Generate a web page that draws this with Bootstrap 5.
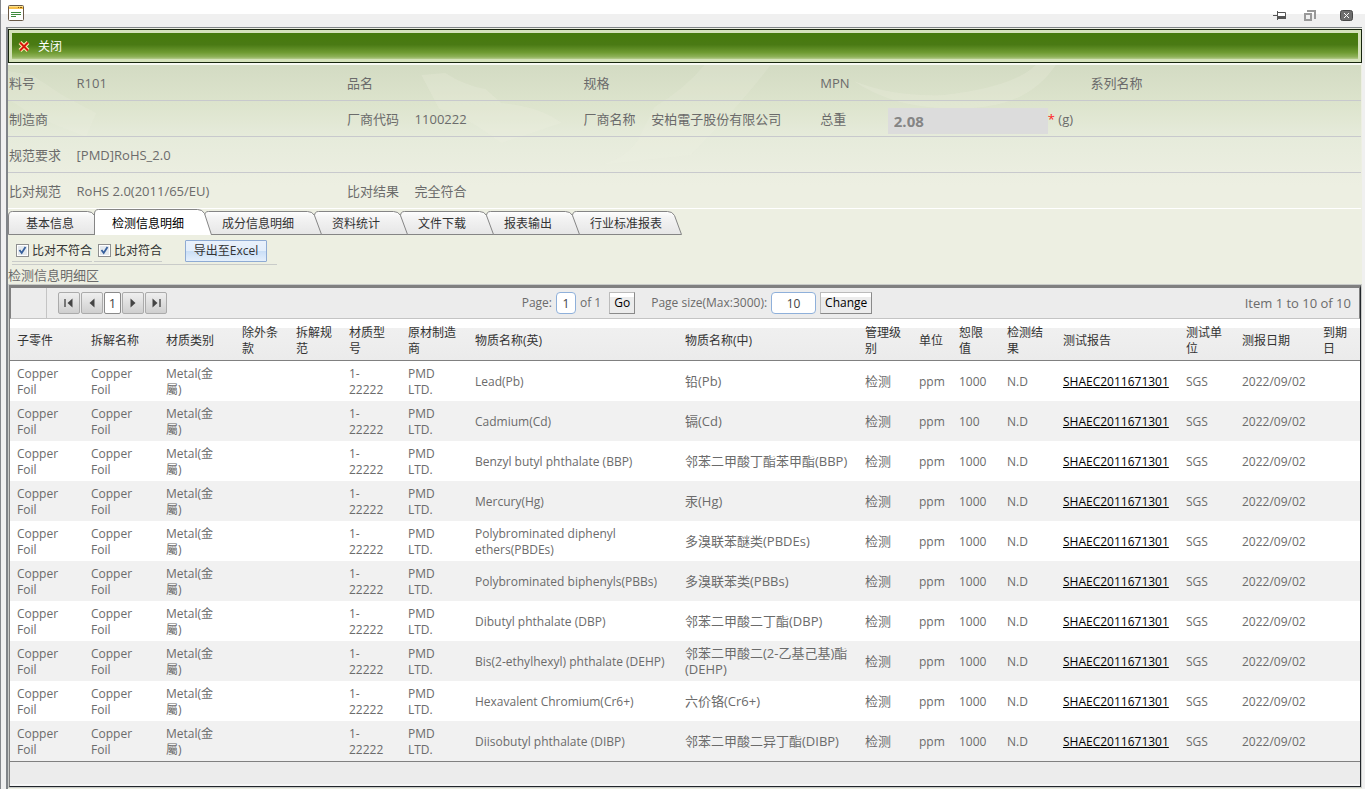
<!DOCTYPE html>
<html lang="zh-CN">
<head>
<meta charset="utf-8">
<meta name="viewport" content="width=device-width, initial-scale=1">
<title>检测信息明细</title>
<link href="https://cdn.jsdelivr.net/npm/bootstrap@5.3.0/dist/css/bootstrap.min.css" rel="stylesheet">
<style>
body{background:#f0f0f0;font-family:"Open Sans","Noto Sans CJK SC",sans-serif;font-size:13px;line-height:16px;color:#6b6b6b;border-left:1px solid #85888c}
.titlebar{height:27px;padding:0 12px 0 7px;background:linear-gradient(#fff 14px,#f0f0f0 14px)}
.win-btn{border:0;background:none;padding:0;line-height:0}
.pane{margin:0 3px 0 5px;border-left:2px solid #808488;border-top:1px solid #808488;background:#edefe2;padding-bottom:2px}
.toolbar{height:34px;margin-top:1px;border:1px solid #16240d;padding:3px;background:#d5e2bb}
.toolbar-in{height:26px;background:linear-gradient(#457a0b,#4a7a14 45%,#6f9b32 75%,#8fb25a 92%,#b5cc8c);padding:2px 0 0 6px}
.close-link{color:#fff;font-size:12px;text-decoration:none}
.close-link:hover{color:#fff}
.info{margin-right:1px;border-top:2px solid #f8faf4;position:relative;background:linear-gradient(#d3dbc3,#dde4cd 40px,#e6ebdb 72px,#edefe2 120px);border-bottom:1px solid #fff}
.swirl{position:absolute;inset:0;width:100%;height:100%}
.info-row{position:relative;display:grid;grid-template-columns:2fr 8fr 2fr 5fr 2fr 5fr 2fr 6fr 2fr 6fr;height:36px;align-items:center;border-bottom:1px solid #c8c9cd;padding-left:1px}
.info-row:last-child{border-bottom:0;height:35px}
.weight{width:160px;height:26px;border:0;background:#dcdcdc;color:#858585;font-size:15px;font-weight:700;padding:0 6px;margin-top:4px}
.req{color:#f22}
.tab-btn{position:relative;height:26px;border:0;background:none;padding:3px 20px 0 18px;font-size:12px;color:#333;white-space:nowrap}
.tab-btn svg{position:absolute;left:0;top:0;z-index:-1;overflow:visible}
.tab-btn:nth-child(1){z-index:7}
.tab-btn:nth-child(2){z-index:8}
.tab-btn:nth-child(3){z-index:6}
.tab-btn:nth-child(4){z-index:5}
.tab-btn:nth-child(5){z-index:4}
.tab-btn:nth-child(6){z-index:3}
.tab-btn:nth-child(7){z-index:2}
.tab-btn.active{color:#000}
.filters{height:32px;padding:5px 0 0 4px;color:#333;font-size:12px}
.tick{border-bottom:1px solid #c9cbc9;height:22px;padding-left:4px;margin-right:2px;gap:3px}
.tick input{appearance:none;width:13px;height:13px;margin:0;border:1px solid #8e8f8f;background:#e4e9ee;box-shadow:inset 0 0 0 1px #fff;background-image:url("data:image/svg+xml,%3Csvg xmlns='http://www.w3.org/2000/svg' viewBox='0 0 11 11'%3E%3Cpath d='M2.5 5 L4.7 8 L8.5 2' fill='none' stroke='%23365f9c' stroke-width='1.8'/%3E%3C/svg%3E")}
.tick-group{border-bottom:1px solid #c9cbc9;height:25px;width:173px}
.excel-wrap{border-bottom:1px solid #c9cbc9;height:25px;width:92px}
.excel{width:82px;height:22px;border:1px solid #8fabd3;border-radius:1px;background:linear-gradient(#e9f1fb 0,#e3eefb 50%,#c9def6 50%,#e4effc);color:#333;padding:0}
.grid-box{margin:2px 1px 0;border:1px solid #22262b;border-top:3px solid #808080;border-left:1px solid #808080;outline:1px solid #c8cac8;background:#ececec}
.pager{display:grid;grid-template-columns:1fr auto 1fr;align-items:center;height:31px;border-bottom:1px solid #c4c4c4;border-left:1px solid #808080;border-right:1px solid #808080}
.pg-lead{width:36px;border-right:1px solid #c4c4c4;margin-right:11px}
.pg-group{gap:1px}
.pg{width:22px;height:22px;border:1px solid #ababab;border-radius:2px;background:linear-gradient(#efefef,#cfcfcf);padding:0;line-height:0}
.pg-now{width:17px;height:22px;border:1px solid #8a8a8a;border-radius:2px;background:#fff;padding:0;color:#444}
.pg-set{font-size:12px;padding-left:24px}
.box-in{height:22px;border:1px solid #8fb0da;border-radius:4px;background:#fff;text-align:center;color:#444;padding:0}
.box-s{width:20px;margin:0 4px}
.box-l{width:45px;margin:0 4px}
.go{height:22px;border:1px solid;border-color:#bbb #8a8a8a #8a8a8a #bbb;background:linear-gradient(#fff 4px,#ececec 4px);color:#000;padding:0 4px}
.rs-table{width:100%;table-layout:fixed;border-collapse:separate;border-spacing:0}
.rs-table th{height:42px;padding:2px 7px 0;font-weight:400;font-size:12px;color:#333;white-space:pre;border-bottom:1px solid #808080;background:linear-gradient(#fff 9px,#f0f0f0 9px,#ebebeb)}
.rs-table td{height:40px;padding:1px 7px 0;white-space:pre;font-size:12px}
.rs-table td:nth-child(9),.rs-table td:nth-child(10){font-size:13px;padding-top:0}
.rs-table tbody tr{background:#fff}
.rs-table tbody tr:nth-child(even){background:#f1f1f1}
.rs-table a{color:#000}
.grid-foot{height:25px;border-top:1px solid #808080;border-bottom:2px solid #f6f6f6}
</style>
</head>
<body>
<svg width="0" height="0" class="position-absolute" aria-hidden="true">
<defs>
<linearGradient id="tabFill" x1="0" y1="0" x2="0" y2="1"><stop offset="0" stop-color="#fff"/><stop offset=".25" stop-color="#f4f4f4"/><stop offset="1" stop-color="#e6e6e6"/></linearGradient>
<path id="tabShort" d="M.5 25.500V7q0-4.500 4-4.500h75q5 0 7 4l7 19z" fill="url(#tabFill)" stroke="#858585"/>
<path id="tabLong" d="M.5 25.500V7q0-4.500 4-4.500h99q5 0 7 4l7 19z" fill="url(#tabFill)" stroke="#858585"/>
<path id="tabLast" d="M.5 25.500V7q0-4.500 4-4.500h91q5 0 7 4l7 19z" fill="url(#tabFill)" stroke="#858585"/>
</defs>
</svg>
<header class="titlebar d-flex justify-content-between">
<svg class="mt-1" width="17" height="17" viewBox="0 0 17 17"><rect x=".5" y="1.500" width="15" height="15" rx="1" fill="#fff" stroke="#6a5a48"/><path d="M1 2h14v3H1z" fill="#f7c04a"/><path d="M1 2h14v1H1z" fill="#fbe08a"/><path d="M10 3h1v1h-1zM12 3h2v1h-2z" fill="#8a5a10"/><path d="M3 8.500h10M3 10.500h10M3 12.500h5" stroke="#3c8a3c"/></svg>
<div class="d-flex align-items-start pt-2">
<button class="win-btn" aria-label="固定"><svg width="14" height="14" viewBox="0 0 14 14"><path d="M1 7.500h4M5.500 3v9M6 4.500h7.500v6H6" fill="#fff" stroke="#555"/><path d="M6 8h8v3H6z" fill="#555"/></svg></button>
<button class="win-btn ms-3" aria-label="还原"><svg width="14" height="14" viewBox="0 0 14 14"><path d="M5 3h8v8M3 6h6v6H3z" fill="none" stroke="#999" stroke-width="2"/></svg></button>
<button class="win-btn ms-4" aria-label="关闭窗口"><svg width="13" height="14" viewBox="0 0 13 14"><rect x=".5" y="2.500" width="12" height="10" rx="2" fill="#6e6e6e" stroke="#484848"/><path d="M4 5l5 5M9 5l-5 5" stroke="#fff"/></svg></button>
</div>
</header>
<main class="pane">
<div class="toolbar"><div class="toolbar-in d-flex align-items-center"><a href="#" class="close-link d-flex align-items-center gap-2"><svg width="12" height="12" viewBox="0 0 12 12"><path d="M2 1.500l8 8M10 1.500l-8 8" stroke="#fff3b0" stroke-width="4"/><path d="M2 1.500l8 8M10 1.500l-8 8" stroke="#d8150c" stroke-width="2"/></svg><span>关闭</span></a></div></div>
<section class="info">
<svg class="swirl" viewBox="0 0 1352 143" preserveAspectRatio="none" aria-hidden="true"><g fill="#f0f3e4" fill-opacity=".22"><path d="M413 10l24-2q18 12 40 16l16 14q40 4 60 20l-60 20q-40-30-62-34z"/><path d="M696 0q-20 24-50 42l-14 28q-10 22-40 30l90-10q50-50 80-90z" fill-opacity=".16"/><path d="M845 16q40 16 90 14 70-8 92-30h20q-24 36-72 42-80 8-130-26z"/><path d="M0 6l24 4 30 20 34 18-10 24-50-20-28-18z" fill-opacity=".16"/></g></svg>
<div class="info-row"><span>料号</span><span>R101</span><span>品名</span><span></span><span>规格</span><span></span><span>MPN</span><span></span><span>系列名称</span></div>
<div class="info-row"><span>制造商</span><span></span><span>厂商代码</span><span>1100222</span><span>厂商名称</span><span>安柏電子股份有限公司</span><label for="weight">总重</label><span class="d-flex align-items-center text-nowrap"><input id="weight" class="weight" value="2.08" disabled><span class="req">*</span>&nbsp;(g)</span></div>
<div class="info-row"><span>规范要求</span><span>[PMD]RoHS_2.0</span></div>
<div class="info-row"><span>比对规范</span><span>RoHS 2.0(2011/65/EU)</span><span>比对结果</span><span>完全符合</span></div>
</section>
<nav class="d-flex">
<button class="tab-btn"><svg width="94" height="26"><use href="#tabShort"/></svg>基本信息</button>
<button class="tab-btn active"><svg width="118" height="26"><path d="M.5 26V5q0-4.500 4-4.500h99q5 0 7 4l7 21.500z" fill="#fff"/><path d="M.5 26V5q0-4.500 4-4.500h99q5 0 7 4l7 21.500" fill="none" stroke="#858585"/></svg>检测信息明细</button>
<button class="tab-btn"><svg width="118" height="26"><use href="#tabLong"/></svg>成分信息明细</button>
<button class="tab-btn"><svg width="94" height="26"><use href="#tabShort"/></svg>资料统计</button>
<button class="tab-btn"><svg width="94" height="26"><use href="#tabShort"/></svg>文件下载</button>
<button class="tab-btn"><svg width="94" height="26"><use href="#tabShort"/></svg>报表输出</button>
<button class="tab-btn"><svg width="110" height="26"><use href="#tabLast"/></svg>行业标准报表</button>
</nav>
<div class="filters d-flex"><div class="tick-group d-flex"><label class="tick d-flex align-items-center"><input type="checkbox" checked>比对不符合</label><label class="tick d-flex align-items-center"><input type="checkbox" checked>比对符合</label></div><div class="excel-wrap"><button class="excel">导出至Excel</button></div></div>
<div>检测信息明细区</div>
<section class="grid-box">
<div class="pager">
<div class="d-flex align-items-center h-100">
<span class="pg-lead h-100"></span>
<div class="d-flex pg-group">
<button class="pg" aria-label="首页"><svg width="10" height="10"><path d="M1 1v8" stroke="#555" stroke-width="1.500"/><path d="M8.500 .5v9L3.500 5z" fill="#444"/></svg></button>
<button class="pg" aria-label="上一页"><svg width="10" height="10"><path d="M7.500 .5v9L2.500 5z" fill="#444"/></svg></button>
<button class="pg-now">1</button>
<button class="pg" aria-label="下一页"><svg width="10" height="10"><path d="M2.500 .5v9L7.500 5z" fill="#444"/></svg></button>
<button class="pg" aria-label="末页"><svg width="10" height="10"><path d="M9 1v8" stroke="#555" stroke-width="1.500"/><path d="M1.500 .5v9L6.500 5z" fill="#444"/></svg></button>
</div>
</div>
<div class="pg-set d-flex align-items-center">
<label for="pageNo">Page:</label><input id="pageNo" class="box-in box-s" value="1"><span>of 1</span><button class="go ms-2">Go</button>
<label for="pageSize" class="ps-3">Page size(Max:3000):</label><input id="pageSize" class="box-in box-l" value="10"><button class="go">Change</button>
</div>
<div class="text-end pe-2">Item 1 to 10 of 10</div>
</div>
<table class="rs-table">
<colgroup id="cols"></colgroup>
<thead><tr><th>子零件</th><th>拆解名称</th><th>材质类别</th><th>除外条
款</th><th>拆解规
范</th><th>材质型
号</th><th>原材制造
商</th><th>物质名称(英)</th><th>物质名称(中)</th><th>管理级
别</th><th>单位</th><th>恕限
值</th><th>检测结
果</th><th>测试报告</th><th>测试单
位</th><th>测报日期</th><th>到期
日</th></tr></thead>
<tbody id="rows"></tbody>
</table>
<div class="grid-foot"></div>
</section>
</main>
<script src="https://cdn.jsdelivr.net/npm/bootstrap@5.3.0/dist/js/bootstrap.bundle.min.js"></script>
<script>
const widths = [74,75,76,54,53,59,67,210,180,54,40,48,56,123,56,81,44];
const total = widths.reduce((a, b) => a + b, 0);
document.getElementById('cols').innerHTML = widths.map(w => `<col style="width:${w / total * 100}%">`).join('');
const substances = [
  ['Lead(Pb)', '铅(Pb)', 1000],
  ['Cadmium(Cd)', '镉(Cd)', 100],
  ['Benzyl butyl phthalate (BBP)', '邻苯二甲酸丁酯苯甲酯(BBP)', 1000],
  ['Mercury(Hg)', '汞(Hg)', 1000],
  ['Polybrominated diphenyl\nethers(PBDEs)', '多溴联苯醚类(PBDEs)', 1000],
  ['Polybrominated biphenyls(PBBs)', '多溴联苯类(PBBs)', 1000],
  ['Dibutyl phthalate (DBP)', '邻苯二甲酸二丁酯(DBP)', 1000],
  ['Bis(2-ethylhexyl) phthalate (DEHP)', '邻苯二甲酸二(2-乙基己基)酯\n(DEHP)', 1000],
  ['Hexavalent Chromium(Cr6+)', '六价铬(Cr6+)', 1000],
  ['Diisobutyl phthalate (DIBP)', '邻苯二甲酸二异丁酯(DIBP)', 1000]
];
document.getElementById('rows').innerHTML = substances.map(([en, zh, limit]) => '<tr>' + [
  'Copper\nFoil', 'Copper\nFoil', 'Metal(金\n屬)', '', '', '1-\n22222', 'PMD\nLTD.', en, zh, '检测', 'ppm', limit, 'N.D',
  '<a href="#">SHAEC2011671301</a>', 'SGS', '2022/09/02', ''
].map(c => `<td>${c}</td>`).join('') + '</tr>').join('');
</script>
</body>
</html>
